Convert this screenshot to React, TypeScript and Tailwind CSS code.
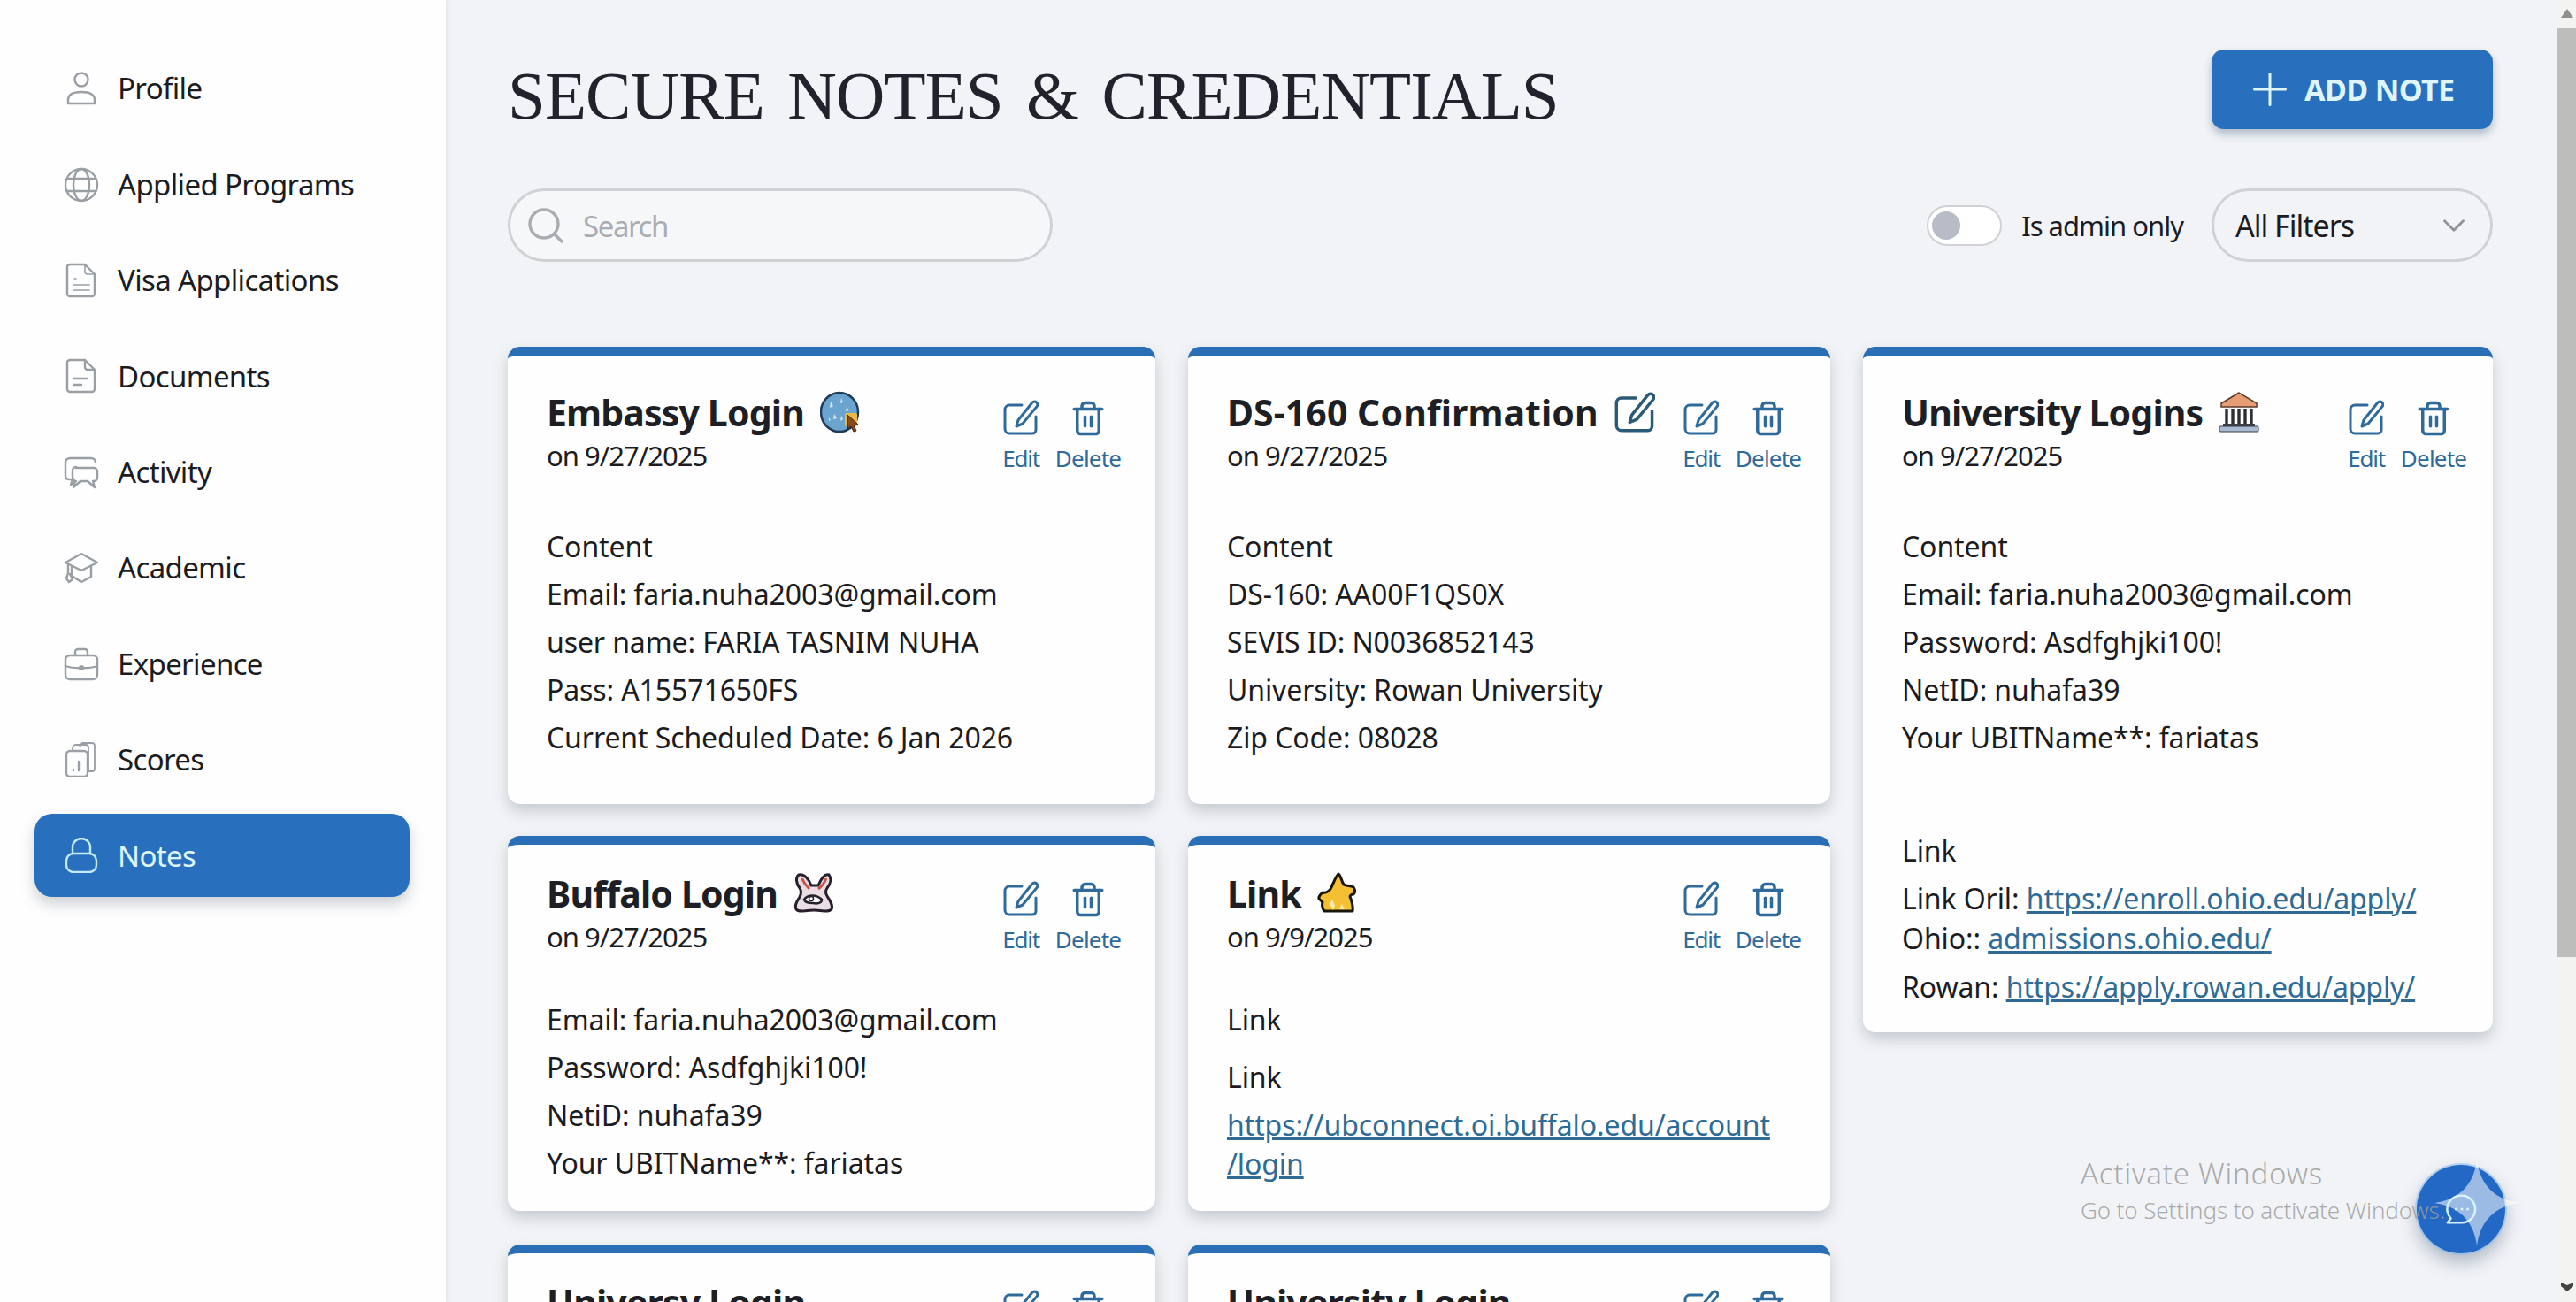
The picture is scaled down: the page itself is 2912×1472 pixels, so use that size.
import React, { FC, ReactNode } from "react";
import { Plus, Search, ChevronDown, Trash2 } from "lucide-react";

const Ico: FC<{ children: ReactNode; className?: string }> = ({ children, className }) => (
  <svg viewBox="0 0 40 40" fill="none" stroke="currentColor" strokeWidth="2.4" strokeLinecap="round" strokeLinejoin="round" className={className}>
    {children}
  </svg>
);

const navIcons: Record<string, ReactNode> = {
  Profile: (
    <>
      <circle cx="20" cy="10" r="7.5" />
      <path d="M5 37v-4c0-6 5-9 15-9s15 3 15 9v4z" />
    </>
  ),
  "Applied Programs": (
    <>
      <circle cx="20" cy="20" r="18" />
      <ellipse cx="20" cy="20" rx="9" ry="18" />
      <path d="M4 13h32M4 27h32" />
    </>
  ),
  "Visa Applications": (
    <>
      <path d="M7 2h17l11 11v22a3 3 0 0 1-3 3H7a3 3 0 0 1-3-3V5a3 3 0 0 1 3-3z" />
      <path d="M24 2v8a3 3 0 0 0 3 3h8M12 18h2M11 25h18M11 31h18" strokeWidth="1.6" />
    </>
  ),
  Documents: (
    <>
      <path d="M7 2h17l11 11v22a3 3 0 0 1-3 3H7a3 3 0 0 1-3-3V5a3 3 0 0 1 3-3z" />
      <path d="M24 2v8a3 3 0 0 0 3 3h8M11 23h16M11 30h9" />
    </>
  ),
  Activity: (
    <>
      <path d="M10 28H6a4 4 0 0 1-4-4V9a5 5 0 0 1 5-5h24a5 5 0 0 1 5 5" />
      <path d="M14 15h20a4 4 0 0 1 4 4v7a4 4 0 0 1-4 4h-1l2 7-8-7h-8l-8 7 2-7a6 6 0 0 1-3-5v-7a4 4 0 0 1 4-4z" />
      <path d="M10 28l-2 6 6-4" />
    </>
  ),
  Academic: (
    <>
      <path d="M20 4L2 14l18 9 18-9z" />
      <path d="M9 19v10l11 7 11-6V19" />
      <path d="M5 17v9l-2 6 3 4 4-3-3-6" />
    </>
  ),
  Experience: (
    <>
      <rect x="2" y="10" width="36" height="27" rx="5" />
      <path d="M13 10V6a3 3 0 0 1 3-3h8a3 3 0 0 1 3 3v4M2 22c8 3 28 3 36 0" />
      <circle cx="20" cy="24" r="1.8" fill="currentColor" />
    </>
  ),
  Scores: (
    <>
      <rect x="3" y="10" width="24" height="29" rx="4" />
      <path d="M10 10V7a4 4 0 0 1 4-4h11a3 3 0 0 1 3 3v26M18 4a4 4 0 0 1 3-3h11a3 3 0 0 1 3 3v26a3 3 0 0 1-3 3h-4" strokeWidth="1.8" />
      <path d="M11 31v1M17 22v10" />
    </>
  ),
  Notes: (
    <>
      <path d="M10 18v-7a10 10 0 0 1 20 0v7" />
      <rect x="3" y="18" width="34" height="21" rx="8" />
    </>
  ),
};

const navItems = ["Profile", "Applied Programs", "Visa Applications", "Documents", "Activity", "Academic", "Experience", "Scores"];

const EditIcon: FC<{ className?: string }> = ({ className }) => (
  <svg viewBox="0 0 40 40" fill="none" stroke="currentColor" strokeWidth="3" strokeLinecap="round" strokeLinejoin="round" className={className}>
    <path d="M21 6H7a5 5 0 0 0-5 5v22a5 5 0 0 0 5 5h26a4 4 0 0 0 4-4V19" />
    <path d="M33 3a3.4 3.4 0 0 1 5 4.6L22 27l-7 3 2-7z" />
  </svg>
);

const GlobeEmoji = () => (
  <svg viewBox="0 0 46 48" className="w-[46px] h-[48px]">
    <ellipse cx="22" cy="24" rx="21" ry="22" fill="#6ba5cf" stroke="#1f3d57" strokeWidth="2.5" />
    <path d="M12 12l3 5-4 2zM24 8l2 5-3 1zM30 18l3 4-4 1zM16 26l3 5-4 1zM24 28l2 4-3 2zM10 30l2 3-2 1z" fill="#d3e8f4" />
    <rect x="28" y="25" width="14" height="15" rx="2" fill="#e9b949" />
    <path d="M31 27l12 11-5 1 3 6-3 1-3-6-4 3z" fill="#8a4a1c" stroke="#3a1d08" strokeWidth="1" />
  </svg>
);

const BankEmoji = () => (
  <svg viewBox="0 0 46 46" className="w-[46px] h-[46px]">
    <path d="M23 1L3 13v4h40v-4z" fill="#e79d74" stroke="#5b3a2c" strokeWidth="1.5" />
    <path d="M9 19v17M16 19v17M23 19v17M30 19v17M37 19v17" stroke="#2d2f36" strokeWidth="3.4" />
    <rect x="5" y="36" width="36" height="3" fill="#3a3d46" />
    <rect x="1" y="39" width="44" height="6" rx="1" fill="#a9bbd0" stroke="#3a3d46" strokeWidth="1" />
  </svg>
);

const BuffaloEmoji = () => (
  <svg viewBox="0 0 46 46" fill="none" className="w-[46px] h-[46px]">
    <path d="M6 2c-4 3-3 10 1 15 2 3 2 6 0 10-3 5-6 9-4 14 3 4 9 1 20 1s16 3 20-1c2-5-2-10-5-15-2-3-2-6 0-9 4-5 5-11 2-15-5-2-9 5-12 12h-8C18 8 12 0 6 2z" fill="#eadde3" stroke="#26202c" strokeWidth="3" />
    <path d="M10 6c1 5 5 9 8 12M37 6c-2 5-5 9-9 12" stroke="#c8564b" strokeWidth="3" />
    <path d="M12 30c4-6 14-6 20 0 0 4-5 5-10 4-5 0-9-1-10-4z" fill="#fff" stroke="#26202c" strokeWidth="2.5" />
    <circle cx="20" cy="29" r="2.5" stroke="#26202c" strokeWidth="1.5" />
  </svg>
);

const StarEmoji = () => (
  <svg viewBox="0 0 46 48" className="w-[46px] h-[48px]">
    <path d="M24 2c3 2 3 8 6 12 3 2 8 1 11 3 2 3 2 6 0 8-3 0-5 2-3 5 1 4 3 8 2 14H8c-2-2-3-7-2-10l-4-4c-1-3 2-5 4-7 3 1 7-1 9-4 3-5 5-13 9-17z" fill="#f3c033" stroke="#17140a" strokeWidth="3" strokeLinejoin="round" />
    <path d="M14 36l3-5 3 7-2 5zM28 36l3 6h-6z" fill="#fbe9b0" />
  </svg>
);

const Card: FC<{
  title: string;
  titleCls?: string;
  date?: string;
  emoji?: ReactNode;
  pad: string;
  head: string;
  body?: string;
  children?: ReactNode;
}> = ({ title, titleCls, date, emoji, pad, head, body, children }) => (
  <div className={`bg-[#fefefe] rounded-[14px] border-t-[10px] border-t-[#2a6fb5] shadow-[0_8px_16px_rgba(90,100,115,0.28)] pl-[44px] shrink-0 ${pad}`}>
    <div className={`flex justify-between ${head}`}>
      <div>
        <div className="flex items-center gap-[18px] h-[50px]">
          <h2 className={`font-bold text-[41px] leading-[50px] text-[#1d1f24] ${titleCls ?? "tracking-[-0.85px]"}`}>{title}</h2>
          {emoji}
        </div>
        <p className="text-[31px] tracking-[-1px] leading-[48px] text-[#1c1c1f]">{date}</p>
      </div>
      <div className="flex gap-[23px] pt-[11px]">
        <button className="flex flex-col items-center w-[40px] text-[#2f6a9a]">
          <EditIcon className="w-[40px] h-[40px]" />
          <span className="text-[26px] tracking-[-1.2px] leading-[36px] mt-[8px]">Edit</span>
        </button>
        <button className="flex flex-col items-center w-[66px] text-[#2f6a9a]">
          <Trash2 className="w-[42px] h-[42px]" strokeWidth={2} />
          <span className="text-[26px] tracking-[-0.8px] leading-[36px] mt-[6px]">Delete</span>
        </button>
      </div>
    </div>
    {children && <div className={`text-[32px] tracking-[-0.1px] leading-[54px] text-[#1c1c1f] ${body ?? ""}`}>{children}</div>}
  </div>
);

const Url: FC<{ children: ReactNode }> = ({ children }) => <a className="text-[#2f6b94] underline">{children}</a>;

export default function App() {
  return (
    <div className="relative flex h-screen overflow-hidden bg-[#f1f3f6] font-['Noto_Sans',sans-serif]">
      <aside className="w-[504px] shrink-0 bg-[#fefefe] pt-[46px] shadow-[2px_0_6px_rgba(120,125,135,0.12)] z-10">
        {navItems.map((name) => (
          <div key={name} className="h-[108.4px] flex items-center pl-[72px] gap-[21px]">
            <Ico className="w-[40px] h-[40px] text-[#9a9fa6]">{navIcons[name]}</Ico>
            <span className="text-[33px] tracking-[-0.65px] text-[#1c1c1f]">{name}</span>
          </div>
        ))}
        <div className="h-[108.4px] flex items-center">
          <div className="ml-[39px] w-[424px] h-[94px] rounded-[20px] bg-[#2870bd] shadow-[0_8px_16px_rgba(90,100,115,0.3)] flex items-center pl-[33px] gap-[21px]">
            <Ico className="w-[40px] h-[40px] text-[#c4eaf8]">{navIcons.Notes}</Ico>
            <span className="text-[33px] tracking-[-0.65px] text-[#dff5fc]">Notes</span>
          </div>
        </div>
      </aside>

      <main className="flex-1 min-w-0 pl-[70px] pr-[70px]">
        <div className="flex items-start justify-between pt-[56px]">
          <h1 className="mt-[7px] font-['Liberation_Serif',serif] text-[77px] leading-[90px] tracking-[-0.9px] [word-spacing:8px] text-[#20232c]">SECURE NOTES &amp; CREDENTIALS</h1>
          <button className="w-[318px] h-[90px] rounded-[14px] bg-[#2870bd] shadow-[0_6px_10px_rgba(60,90,130,0.35)] flex items-center pl-[36px] gap-[9px] text-[#dff5fc]">
            <Plus className="w-[60px] h-[60px]" strokeWidth={1.2} />
            <span className="font-bold text-[34px] tracking-[-0.6px]">ADD NOTE</span>
          </button>
        </div>

        <div className="flex items-center justify-between mt-[60px]">
          <div className="w-[616px] h-[83px] rounded-full border-[3px] border-[#cfd1d5] bg-[#f6f7f9] flex items-center pl-[16px] gap-[18px] text-[#a9acb1]">
            <Search className="w-[48px] h-[48px]" strokeWidth={1.7} />
            <span className="pt-[2px] text-[33px] tracking-[-1.4px]">Search</span>
          </div>
          <div className="flex items-center">
            <div className="w-[85px] h-[46px] rounded-full border-[2px] border-[#cfd1d5] bg-white flex items-center pl-[4px]">
              <div className="w-[32px] h-[32px] rounded-full bg-[#b7bcc6]" />
            </div>
            <span className="ml-[22px] pt-[2px] text-[31px] tracking-[-1px] text-[#1c1c1f]">Is admin only</span>
            <div className="ml-[32px] w-[318px] h-[83px] rounded-full border-[3px] border-[#cfd1d5] flex items-center justify-between pl-[24px] pr-[20px]">
              <span className="pt-[2px] text-[34px] tracking-[-1px] text-[#1c1c1f]">All Filters</span>
              <ChevronDown className="w-[42px] h-[42px] text-[#8f9399]" strokeWidth={1.6} />
            </div>
          </div>
        </div>

        <div className="grid grid-cols-[732px_726px_712px] gap-x-[37px] mt-[96px]">
          <div className="flex flex-col gap-[36px]">
            <Card title="Embassy Login" date="on 9/27/2025" emoji={<GlobeEmoji />} pad="pr-[43px]" head="pt-[39px]" body="mt-[52px] pb-[48px]">
              <p>Content</p>
              <p>Email: faria.nuha2003@gmail.com</p>
              <p>user name: FARIA TASNIM NUHA</p>
              <p>Pass: A15571650FS</p>
              <p>Current Scheduled Date: 6 Jan 2026</p>
            </Card>
            <Card title="Buffalo Login" date="on 9/27/2025" emoji={<BuffaloEmoji />} pad="pr-[43px]" head="pt-[30px]" body="mt-[43px] pb-[27px]">
              <p>Email: faria.nuha2003@gmail.com</p>
              <p>Password: Asdfghjki100!</p>
              <p>NetiD: nuhafa39</p>
              <p>Your UBITName**: fariatas</p>
            </Card>
            <div className="mt-[2px]">
              <Card title="Universy Login" pad="pr-[43px]" head="pt-[30px]" />
            </div>
          </div>
          <div className="flex flex-col gap-[36px]">
            <Card title="DS-160 Confirmation" titleCls="tracking-[0.05px]" date="on 9/27/2025" emoji={<EditIcon className="w-[46px] h-[48px] text-[#2a5a78]" />} pad="pr-[37px]" head="pt-[39px]" body="mt-[52px] pb-[48px]">
              <p>Content</p>
              <p>DS-160: AA00F1QS0X</p>
              <p>SEVIS ID: N0036852143</p>
              <p>University: Rowan University</p>
              <p>Zip Code: 08028</p>
            </Card>
            <Card title="Link" date="on 9/9/2025" emoji={<StarEmoji />} pad="pr-[37px]" head="pt-[30px]" body="mt-[43px] pb-[31px]">
              <p>Link</p>
              <p className="mt-[11px]">Link</p>
              <p className="mt-[5px] leading-[44px]"><Url>https://ubconnect.oi.buffalo.edu/account<br />/login</Url></p>
            </Card>
            <div className="mt-[2px]">
              <Card title="University Login" pad="pr-[37px]" head="pt-[30px]" />
            </div>
          </div>
          <div>
            <Card title="University Logins" date="on 9/27/2025" emoji={<BankEmoji />} pad="pr-[34px]" head="pt-[39px]" body="mt-[52px] pb-[24px]">
              <p>Content</p>
              <p>Email: faria.nuha2003@gmail.com</p>
              <p>Password: Asdfghjki100!</p>
              <p>NetID: nuhafa39</p>
              <p>Your UBITName**: fariatas</p>
              <p className="mt-[74px]">Link</p>
              <p>Link Oril: <Url>https://enroll.ohio.edu/apply/</Url></p>
              <p className="leading-[36px]">Ohio:: <Url>admissions.ohio.edu/</Url></p>
              <p className="mt-[10px]">Rowan: <Url>https://apply.rowan.edu/apply/</Url></p>
            </Card>
          </div>
        </div>
      </main>

      {/* page scrollbar, drawn so its width matches the capture */}
      <div className="w-[24px] shrink-0 bg-[#f3f3f1] flex flex-col pt-[10px] pb-[12px]">
        <svg viewBox="0 0 14 10" className="ml-[7px] w-[14px] h-[10px] text-[#8e9090]">
          <path d="M7 0l7 10H0z" fill="currentColor" />
        </svg>
        <div className="mt-[12px] ml-[3px] h-[1050px] bg-[#bdbdbb]" />
        <svg viewBox="0 0 14 10" className="mt-auto ml-[7px] w-[14px] h-[10px] text-[#444444]">
          <path d="M0 0l7 3 7-3v4l-7 6-7-6z" fill="currentColor" />
        </svg>
      </div>

      {/* chat button and watermark sit on top of the page */}
      <div className="absolute left-[2732px] top-[1317px] w-[100px] h-[100px] rounded-full bg-[#2368c4] shadow-[0_10px_20px_rgba(70,90,120,0.4)] ring-2 ring-[#8cc0f0]/60" />
      <svg viewBox="0 0 96 96" className="absolute left-[2752px] top-[1312px] w-[96px] h-[96px]">
        <path d="M48 0C52 28 68 44 96 48 68 52 52 68 48 96 44 68 28 52 0 48 28 44 44 28 48 0z" fill="#ffffff" fillOpacity="0.55" />
      </svg>
      <svg viewBox="0 0 40 40" fill="none" className="absolute left-[2763px] top-[1349px] w-[38px] h-[38px]">
        <path d="M21 3a16 16 0 0 1 0 32H4l4-5A16 16 0 0 1 21 3z" stroke="#d8f2fb" strokeWidth="2.6" strokeLinejoin="round" />
        <circle cx="14" cy="19" r="1.6" fill="#d8f2fb" />
        <circle cx="21" cy="19" r="1.6" fill="#d8f2fb" />
        <circle cx="28" cy="19" r="1.6" fill="#d8f2fb" />
      </svg>
      <div className="absolute left-[2352px] top-[1304px] text-[#9c9c9c]/85 font-light pointer-events-none">
        <p className="text-[33px] tracking-[0.8px] leading-[46px]">Activate Windows</p>
        <p className="text-[26px] tracking-[-0.1px] leading-[36px]">Go to Settings to activate Windows.</p>
      </div>
    </div>
  );
}
